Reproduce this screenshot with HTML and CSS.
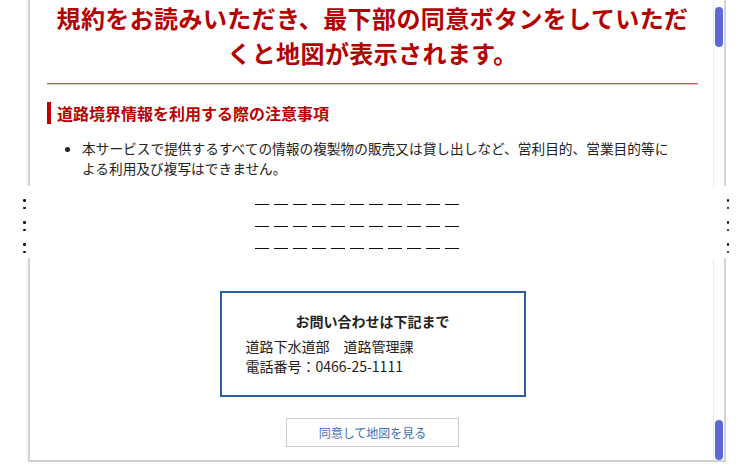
FILE: index.html
```html
<!DOCTYPE html>
<html>
<head>
    <title>利用規約</title>
    <link rel="stylesheet" href="styles.css">
</head>
<body>
    <div class="shot">
        <section class="frame frame-top">
            <div class="pane">
                <div class="content">
                    <h1 class="notice-title">規約をお読みいただき、最下部の同意ボタンをしていただくと地図が表示されます。</h1>
                    <div class="rule"></div>
                    <h2 class="section-title">道路境界情報を利用する際の注意事項</h2>
                    <ul class="notes">
                        <li>本サービスで提供するすべての情報の複製物の販売又は貸し出しなど、営利目的、営業目的等による利用及び複写はできません。</li>
                    </ul>
                </div>
                <div class="scrollbar"><div class="thumb"></div></div>
            </div>
        </section>

        <div class="cut">
            <div class="cut-row"><span class="dots"></span><span class="dashes"></span><span class="dots"></span></div>
            <div class="cut-row"><span class="dots"></span><span class="dashes"></span><span class="dots"></span></div>
            <div class="cut-row"><span class="dots"></span><span class="dashes"></span><span class="dots"></span></div>
        </div>

        <section class="frame frame-bottom">
            <div class="pane">
                <div class="content">
                    <div class="contact">
                        <p class="contact-title">お問い合わせは下記まで</p>
                        <p class="contact-line">道路下水道部　道路管理課</p>
                        <p class="contact-line">電話番号：0466-25-1111</p>
                    </div>
                    <div class="actions">
                        <button class="agree-btn">同意して地図を見る</button>
                    </div>
                </div>
                <div class="scrollbar"><div class="thumb"></div></div>
            </div>
        </section>
    </div>
</body>
</html>
```

FILE: styles.css
```css
body {
    margin: 0;
    background: #fff;
    font-family: "Noto Sans CJK JP", "Noto Sans", sans-serif;
    color: #222;
}

.shot {
    width: 752px;
    height: 464px;
    overflow: hidden;
}

.frame {
    padding-left: 28px;
    overflow: hidden;
}

.frame-top {
    height: 186px;
}

.frame-bottom {
    height: 206px;
}

.pane {
    display: flex;
    width: 698px;
    height: 100%;
    box-sizing: border-box;
    border-left: 2px solid #d2d2d2;
    box-shadow: -1px 0 2px rgba(0, 0, 0, 0.06);
}

.frame-bottom .pane {
    height: 204px;
    border-bottom: 2px solid #cfcfcf;
}

.content {
    flex: 1;
    padding: 0 15px 0 17px;
}

.scrollbar {
    width: 13px;
    box-sizing: border-box;
    border-left: 1px solid #ececec;
    border-right: 2px solid #d4d4d4;
    padding: 0 1px;
    display: flex;
    flex-direction: column;
}

.thumb {
    height: 40px;
    border-radius: 4px;
    background: #5a6ad6;
}

.frame-top .thumb {
    margin-top: 7px;
}

.frame-bottom .scrollbar {
    justify-content: flex-end;
}

/* heading block */
.notice-title {
    margin: 0;
    font-size: 24px;
    letter-spacing: 0.4px;
    line-height: 35px;
    font-weight: bold;
    color: #b30000;
    text-align: center;
}

.rule {
    margin-top: 13px;
    height: 1px;
    background: #d9534f;
    box-shadow: 0 1px 0 rgba(217, 83, 79, 0.35);
}

.section-title {
    margin: 18px 0 0;
    padding-left: 6px;
    border-left: 4px solid #c00000;
    font-size: 16px;
    line-height: 22px;
    font-weight: bold;
    color: #b80000;
}

.notes {
    margin: 15px 0 0;
    padding: 0 20px 0 35px;
    font-size: 13.7px;
    line-height: 19.5px;
    color: #222;
}

/* torn section marker */
.cut {
    height: 72px;
    padding-top: 7px;
    box-sizing: border-box;
    overflow: hidden;
    background: #fff;
}

.cut-row {
    display: flex;
    align-items: center;
    height: 22px;
    padding: 0 23px;
}

.dots {
    display: flex;
    flex-direction: column;
    gap: 5px;
}

.dots::before,
.dots::after {
    content: "";
    width: 2.5px;
    height: 2.5px;
    border-radius: 50%;
    background: #111;
}

.dashes {
    width: 204px;
    height: 1px;
    margin-left: 229px;
    margin-right: auto;
    background: repeating-linear-gradient(to right, #111 0 14px, transparent 14px 19px);
}

/* contact box */
.contact {
    width: 306px;
    box-sizing: border-box;
    margin: 33px auto 0;
    padding: 18px 24px 19px;
    border: 2px solid #2f5ea8;
}

.contact p {
    margin: 0;
}

.contact-title {
    font-size: 14px;
    line-height: 20px;
    font-weight: bold;
    text-align: center;
    margin-bottom: 5px !important;
}

.contact-line {
    font-size: 14px;
    line-height: 20px;
}

.actions {
    display: flex;
    justify-content: center;
    margin-top: 21px;
}

.agree-btn {
    width: 173px;
    height: 29px;
    background: #fff;
    border: 1px solid #cccccc;
    font-family: "Noto Sans CJK JP", "Noto Sans", sans-serif;
    font-size: 12px;
    color: #3f6fb8;
}
```
